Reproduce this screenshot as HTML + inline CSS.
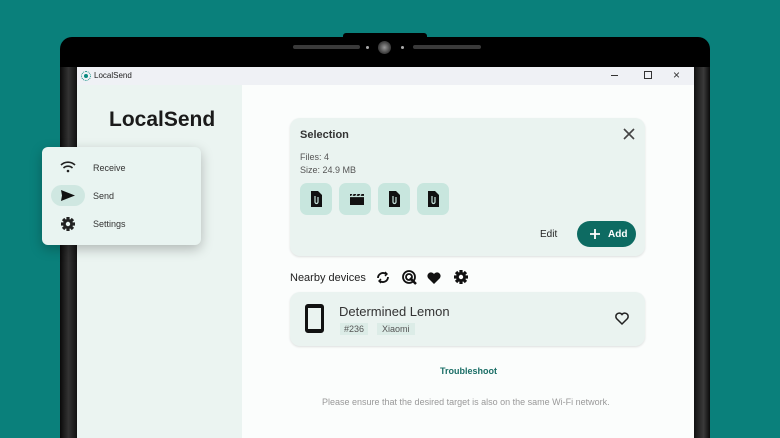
<!DOCTYPE html>
<html><head><meta charset="utf-8"><style>
*{margin:0;padding:0;box-sizing:border-box}
html,body{width:780px;height:438px;overflow:hidden}
body{background:#0a807b;font-family:"Liberation Sans",sans-serif;position:relative}
.abs{position:absolute}
.bezel{left:60px;top:37px;width:650px;height:401px;background:#000;border-radius:12px 12px 0 0}
.rbez{left:694px;top:67px;width:16px;height:371px;background:linear-gradient(90deg,#111,#3a3a3a 60%,#0a0a0a)}
.lbez{left:60px;top:67px;width:17px;height:371px;background:linear-gradient(90deg,#0a0a0a,#333 50%,#111)}
.notch{left:343px;top:33px;width:84px;height:10px;background:#000;border-radius:3px 3px 0 0}
.title{left:77px;top:67px;width:617px;height:18px;background:#eff1f5;font-size:8px;color:#222}
.side{left:77px;top:85px;width:165px;height:353px;background:#ebf4f1}
.main{left:242px;top:85px;width:452px;height:353px;background:#fbfdfc}
.card{background:#eaf3f0;border-radius:10px;box-shadow:0 1px 2px rgba(0,0,0,.12)}
.tile{width:32px;height:32px;background:#c8e6de;border-radius:7px;top:183px}
.menu{left:42px;top:147px;width:159px;height:98px;background:#e9f4f1;border-radius:6px;box-shadow:0 4px 12px rgba(0,0,0,.25)}
.mi{font-size:9px;color:#333}
</style></head><body>
<svg width="0" height="0" style="position:absolute"><defs>
<g id="gear"><circle cx="0" cy="0" r="5" fill="currentColor"/>
<g fill="currentColor"><rect x="-1.6" y="-7" width="3.2" height="14"/><rect x="-1.6" y="-7" width="3.2" height="14" transform="rotate(45)"/><rect x="-1.6" y="-7" width="3.2" height="14" transform="rotate(90)"/><rect x="-1.6" y="-7" width="3.2" height="14" transform="rotate(135)"/></g>
<circle cx="0" cy="0" r="2.2" fill="#fff"/></g></defs></svg>
<div class="abs bezel"></div>
<div class="abs notch"></div>
<div class="abs" style="left:293px;top:45px;width:67px;height:4px;background:#3a3a3a;border-radius:2px"></div>
<div class="abs" style="left:413px;top:45px;width:68px;height:4px;background:#3a3a3a;border-radius:2px"></div>
<div class="abs" style="left:366px;top:46px;width:3px;height:3px;background:#aaa;border-radius:50%"></div>
<div class="abs" style="left:401px;top:46px;width:3px;height:3px;background:#aaa;border-radius:50%"></div>
<div class="abs" style="left:378px;top:41px;width:13px;height:13px;background:radial-gradient(#999,#444 60%,#222);border-radius:50%"></div>
<div class="abs lbez"></div>
<div class="abs rbez"></div>
<div class="abs title">
 <div class="abs" style="left:4px;top:4px;width:10px;height:10px;border:1.5px dotted #0a8a80;border-radius:50%"><div style="margin:1.5px;width:4px;height:4px;background:#0a8a80;border-radius:50%"></div></div>
 <div class="abs" style="left:17px;top:4px">LocalSend</div>
 <div class="abs" style="left:534px;top:8px;width:7px;height:1px;background:#333"></div>
 <div class="abs" style="left:567px;top:4px;width:8px;height:8px;border:1px solid #333"></div>
 <div class="abs" style="left:596px;top:1px;font-size:12px;color:#333">×</div>
</div>
<div class="abs side"></div>
<div class="abs main"></div>
<div class="abs" style="left:109px;top:108px;font-size:21px;font-weight:bold;color:#1a1a1a">LocalSend</div>

<div class="abs card" style="left:290px;top:118px;width:355px;height:138px"></div>
<div class="abs" style="left:300px;top:129px;font-size:11px;font-weight:bold;color:#333">Selection</div>
<svg class="abs" style="left:623px;top:128px" width="12" height="12" stroke="#444" stroke-width="1.6"><path d="M1 1l10 10M11 1l-10 10"/></svg>
<div class="abs" style="left:300px;top:152px;font-size:9px;color:#555">Files: 4</div>
<div class="abs" style="left:300px;top:165px;font-size:9px;color:#555">Size: 24.9 MB</div>
<div class="abs tile" style="left:300px"></div>
<div class="abs tile" style="left:339px"></div>
<div class="abs tile" style="left:378px"></div>
<div class="abs tile" style="left:417px"></div>
<svg class="abs" style="left:300px;top:183px" width="160" height="32">
 <g fill="#111"><path d="M11 8h7l4 4v12h-11z"/><path d="M50 11h14v11h-14z"/><path d="M89 8h7l4 4v12h-11z"/><path d="M128 8h7l4 4v12h-11z"/></g>
 <g fill="none" stroke="#c8e6de" stroke-width="1.2"><path d="M15 13v6a1.5 1.5 0 0 0 3 0v-5"/><path d="M93 13v6a1.5 1.5 0 0 0 3 0v-5"/><path d="M132 13v6a1.5 1.5 0 0 0 3 0v-5"/><path d="M50 13.5h14M53 11l-1.5 2.5M57 11l-1.5 2.5M61 11l-1.5 2.5"/></g>
</svg>
<div class="abs" style="left:540px;top:229px;font-size:10px;color:#222">Edit</div>
<div class="abs" style="left:577px;top:221px;width:59px;height:26px;background:#0d6b62;border-radius:13px;color:#fff;font-size:10px;font-weight:bold">
 <svg class="abs" style="left:13px;top:8px" width="10" height="10" stroke="#fff" stroke-width="1.8"><path d="M5 0v10M0 5h10"/></svg><span class="abs" style="left:31px;top:8px">Add</span></div>

<div class="abs" style="left:290px;top:272px;font-size:11px;color:#222">Nearby devices</div>
<svg class="abs" style="left:375px;top:269px;color:#111" width="95" height="17" fill="none" stroke="#111" stroke-width="1.8">
 <path d="M3 9a5 5 0 0 1 8-4M13 8a5 5 0 0 1-8 4"/><path d="M10 3l2 2-2 2M6 14l-2-2 2-2" stroke-width="1.4"/>
 <circle cx="34" cy="8" r="6"/><circle cx="34" cy="8" r="3"/><path d="M35 9l6 6" stroke-width="2.5"/>
 <path fill="#111" stroke="none" d="M59 15l-6-6a3.3 3.3 0 0 1 6-4 3.3 3.3 0 0 1 6 4z"/>
 <use href="#gear" x="86" y="8" stroke="none" style="color:#111"/>
</svg>
<div class="abs card" style="left:290px;top:292px;width:355px;height:54px"></div>
<div class="abs" style="left:305px;top:304px;width:19px;height:29px;border:3px solid #111;border-width:4px 3px 4px 3px;border-radius:3px"></div>
<div class="abs" style="left:339px;top:304px;font-size:13px;color:#333">Determined Lemon</div>
<div class="abs" style="left:340px;top:323px;padding:1px 4px;background:#dcece7;font-size:9px;color:#555">#236</div>
<div class="abs" style="left:377px;top:323px;padding:1px 5px;background:#dcece7;font-size:9px;color:#555">Xiaomi</div>
<svg class="abs" style="left:614px;top:311px" width="16" height="15"><path d="M8 13l-5.5-5.5a3 3 0 0 1 5.5-4 3 3 0 0 1 5.5 4z" fill="none" stroke="#222" stroke-width="1.5"/></svg>
<div class="abs" style="left:440px;top:366px;font-size:9px;font-weight:bold;color:#1a6e66">Troubleshoot</div>
<div class="abs" style="left:322px;top:397px;font-size:9px;color:#999">Please ensure that the desired target is also on the same Wi-Fi network.</div>

<div class="abs menu"></div>
<svg class="abs" style="left:60px;top:160px" width="16" height="14" fill="none" stroke="#222" stroke-width="1.6"><path d="M1 5a10 10 0 0 1 14 0M3.5 8a6.5 6.5 0 0 1 9 0"/><circle cx="8" cy="11" r="1.3" fill="#222" stroke="none"/></svg>
<div class="abs mi" style="left:93px;top:163px">Receive</div>
<div class="abs" style="left:51px;top:185px;width:34px;height:21px;background:#cfe7e1;border-radius:11px"></div>
<svg class="abs" style="left:60px;top:189px" width="16" height="13"><path d="M1 1l14 5.5-14 5.5 1-5.5z" fill="#111"/></svg>
<div class="abs mi" style="left:93px;top:191px">Send</div>
<svg class="abs" style="left:60px;top:216px;color:#222" width="16" height="16"><g transform="translate(8 8)"><circle r="5" fill="#222"/><g fill="#222"><rect x="-1.6" y="-7" width="3.2" height="14"/><rect x="-1.6" y="-7" width="3.2" height="14" transform="rotate(45)"/><rect x="-1.6" y="-7" width="3.2" height="14" transform="rotate(90)"/><rect x="-1.6" y="-7" width="3.2" height="14" transform="rotate(135)"/></g><circle r="2.2" fill="#e9f4f1"/></g></svg>
<div class="abs mi" style="left:93px;top:219px">Settings</div>
</body></html>
